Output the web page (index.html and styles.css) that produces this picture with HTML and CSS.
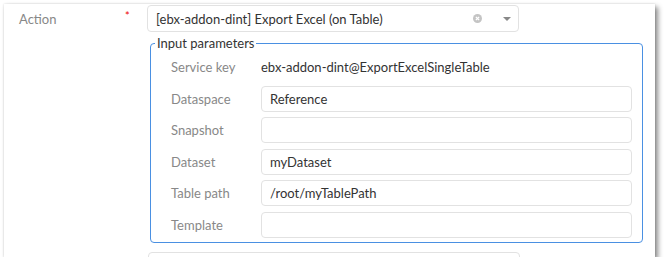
FILE: index.html
```html
<!DOCTYPE html>
<html lang="en">
<head>
    <meta charset="UTF-8">
    <title>Action - Input parameters</title>
    <link rel="stylesheet" href="styles.css">
</head>
<body>

    <!-- Panel del formulario -->
    <div class="panel">

        <div class="row action-row">
            <div class="label">Action</div>
            <div class="required">*</div>
            <div class="select">
                <span class="select-value">[ebx-addon-dint] Export Excel (on Table)</span>
                <svg class="clear-icon" width="9" height="9" viewBox="0 0 10 10">
                    <circle cx="5" cy="5" r="5" fill="#c4c4c4"/>
                    <path d="M3.2 3.2 L6.8 6.8 M6.8 3.2 L3.2 6.8" stroke="#fff" stroke-width="1.5"/>
                </svg>
                <svg class="arrow-icon" width="8" height="4" viewBox="0 0 8 4">
                    <path d="M0 0 L8 0 L4 4 Z" fill="#888"/>
                </svg>
            </div>
        </div>

        <fieldset class="params">
            <legend>Input parameters</legend>

            <div class="param">
                <div class="param-label">Service key</div>
                <div class="param-value">ebx-addon-dint@ExportExcelSingleTable</div>
            </div>
            <div class="param">
                <div class="param-label">Dataspace</div>
                <div class="input">Reference</div>
            </div>
            <div class="param">
                <div class="param-label">Snapshot</div>
                <div class="input"></div>
            </div>
            <div class="param">
                <div class="param-label">Dataset</div>
                <div class="input">myDataset</div>
            </div>
            <div class="param">
                <div class="param-label">Table path</div>
                <div class="input">/root/myTablePath</div>
            </div>
            <div class="param">
                <div class="param-label">Template</div>
                <div class="input"></div>
            </div>
        </fieldset>

        <!-- Siguiente campo, cortado por el borde -->
        <div class="select next-select"></div>
    </div>

</body>
</html>
```

FILE: styles.css
```css
/* Estilos generales */
body {
    margin: 0;
    background-color: #fff;
    font-family: Lato, "Open Sans", sans-serif;
    font-size: 13px;
    color: #333;
}

/* Panel con sombra */
.panel {
    margin: 4px 0 0 4px;
    width: 651px;
    height: 253px;
    overflow: hidden;
    background: #fff;
    box-shadow: 3px 3px 5px rgba(0, 0, 0, 0.45), 0 0 2px rgba(0, 0, 0, 0.15);
    box-sizing: border-box;
}

/* Fila de acción */
.row {
    display: flex;
    align-items: center;
}
.action-row {
    padding-left: 15px;
    margin-top: 1px;
}
.label {
    width: 106px;
    color: #888;
}
.required {
    width: 22px;
    color: #e00;
    font-size: 11px;
    align-self: flex-start;
    margin-top: 4px;
}

/* Select */
.select {
    display: flex;
    align-items: center;
    width: 372px;
    height: 27px;
    box-sizing: border-box;
    border: 1px solid #e2e2e2;
    border-radius: 4px;
    padding: 0 7px 0 8px;
}
.select-value {
    flex: 1;
}
.clear-icon {
    margin-right: 21px;
}
.next-select {
    margin: 9px 0 0 144px;
}

/* Parámetros */
.params {
    margin: 3px 0 0 146px;
    width: 493px;
    box-sizing: border-box;
    border: 1px solid #4a90e2;
    border-radius: 4px;
    padding: 0 10px 4px 4px;
}
.params legend {
    padding: 0 2px;
    color: #333;
}
.param {
    display: flex;
    align-items: center;
    height: 26px;
    margin-top: 5.5px;
    padding-left: 16px;
}
.param:first-of-type {
    margin-top: 3px;
}
.param-label {
    width: 90px;
    color: #888;
}
.input {
    flex: 1;
    height: 26px;
    box-sizing: border-box;
    border: 1px solid #e2e2e2;
    border-radius: 4px;
    padding: 0 8px;
    line-height: 24px;
}
```
